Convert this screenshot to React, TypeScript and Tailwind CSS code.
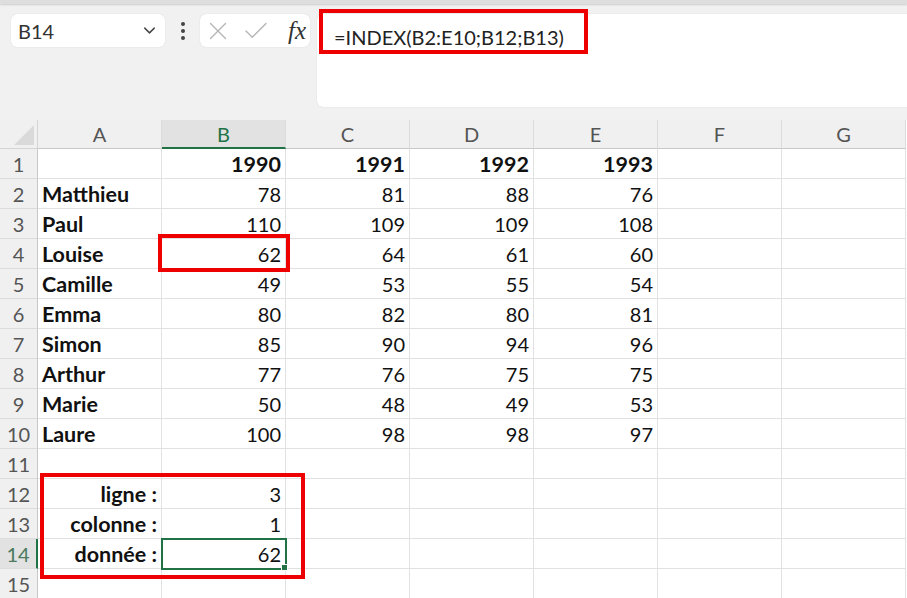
import { ChevronDown, X, Check } from 'lucide-react';

const cols = ['A', 'B', 'C', 'D', 'E', 'F', 'G'];

type Cell = string | number | null;

const rows: Cell[][] = [
  [null, 1990, 1991, 1992, 1993],
  ['Matthieu', 78, 81, 88, 76],
  ['Paul', 110, 109, 109, 108],
  ['Louise', 62, 64, 61, 60],
  ['Camille', 49, 53, 55, 54],
  ['Emma', 80, 82, 80, 81],
  ['Simon', 85, 90, 94, 96],
  ['Arthur', 77, 76, 75, 75],
  ['Marie', 50, 48, 49, 53],
  ['Laure', 100, 98, 98, 97],
  [],
  ['ligne :', 3],
  ['colonne :', 1],
  ['donnée :', 62],
  [],
];

function CellBox({ value, row, col }: { value: Cell; row: number; col: number }) {
  const isLabel = typeof value === 'string';
  const bold = isLabel || row === 0;
  const rightLabel = row >= 11;
  const selected = row === 13 && col === 1;
  return (
    <div
      className={`relative h-[30px] border-r border-b border-[#e1e1e1] bg-white flex items-center px-[4px] leading-none text-[#111] ${
        bold ? 'font-bold text-[21.5px] pt-[2px]' : 'text-[20px]'
      } ${isLabel && !rightLabel ? 'justify-start' : 'justify-end'} ${selected ? 'z-10' : ''}`}
    >
      {value ?? ''}
      {selected && (
        <>
          <div className="absolute -left-[1px] -top-[1px] w-[126px] h-[32px] border-2 border-[#217346]" />
          <div className="absolute -right-[3px] -bottom-[3px] w-[7px] h-[7px] bg-[#217346] border border-white" />
        </>
      )}
    </div>
  );
}

export default function App() {
  return (
    <div className="w-[907px] h-[598px] overflow-hidden bg-[#f1f1f1] font-['Lato','Open_Sans',sans-serif]">
      {/* top strip */}
      <div className="h-[4px] bg-[#dedede] shadow-[0_1px_2px_rgba(0,0,0,0.15)]" />

      {/* formula bar */}
      <div className="relative flex items-start pt-[10px] pl-[11px] h-[116px]">
        <div className="w-[154px] h-[33px] bg-white rounded-[6px] flex items-center justify-between pl-[7px] pr-[6px] shadow-[0_0_1px_rgba(0,0,0,0.2)]">
          <span className="text-[20px] text-[#333]">B14</span>
          <ChevronDown className="w-[19px] h-[19px] text-[#444]" strokeWidth={1.8} />
        </div>
        <div className="w-[35px] h-[33px] flex flex-col items-center justify-center gap-[3px]">
          <span className="w-[4px] h-[4px] rounded-full bg-[#444]" />
          <span className="w-[4px] h-[4px] rounded-full bg-[#444]" />
          <span className="w-[4px] h-[4px] rounded-full bg-[#444]" />
        </div>
        <div className="w-[110px] h-[33px] bg-white rounded-[6px] flex items-center pl-[3px] pr-[4px] shadow-[0_0_1px_rgba(0,0,0,0.2)]">
          <X className="w-[30px] h-[30px] text-[#b5b5b5]" strokeWidth={1.1} />
          <Check className="w-[30px] h-[30px] ml-[8px] text-[#b5b5b5]" strokeWidth={1.1} />
          <span className="ml-auto text-[25px] italic text-[#333] font-['Liberation_Serif',serif] leading-none">fx</span>
        </div>
        <div className="ml-[7px] flex-1 h-[93px] bg-white rounded-l-[6px] pl-[17px] pt-[8px] shadow-[0_0_1px_rgba(0,0,0,0.2)]">
          <span className="text-[20px] text-[#222]">=INDEX(B2:E10;B12;B13)</span>
        </div>
        <div className="absolute left-[319px] top-[5px] w-[269px] h-[45px] border-[4px] border-[#ee0000]" />
      </div>

      {/* sheet */}
      <div className="relative grid grid-cols-[38px_repeat(7,124px)] bg-white">
        <div className="relative h-[29px] bg-[#f0f0f0] border-r border-b border-[#d4d4d4] overflow-hidden">
          <div className="absolute right-[3px] bottom-[3px] w-0 h-0 border-l-[20px] border-l-transparent border-b-[20px] border-b-[#dadada]" />
        </div>
        {cols.map((c) => (
          <div
            key={c}
            className={`h-[29px] flex items-center justify-center text-[20px] border-r border-[#dcdcdc] ${
              c === 'B'
                ? 'bg-[#e2e2e2] text-[#217346] border-b-2 border-b-[#217346]'
                : 'bg-[#f0f0f0] text-[#555] border-b border-b-[#c8c8c8]'
            }`}
          >
            {c}
          </div>
        ))}

        {rows.map((r, ri) => (
          <div key={ri} className="contents">
            <div
              className={`h-[30px] flex items-center justify-center text-[20px] border-b border-[#dcdcdc] ${
                ri === 13
                  ? 'bg-[#e2e2e2] text-[#4b7a5e] border-r-2 border-r-[#217346]'
                  : 'bg-[#f0f0f0] text-[#555] border-r border-r-[#c8c8c8]'
              }`}
            >
              {ri + 1}
            </div>
            {cols.map((_, ci) => (
              <CellBox key={ci} value={r[ci] ?? null} row={ri} col={ci} />
            ))}
          </div>
        ))}

        {/* highlight boxes */}
        <div className="absolute z-20 left-[158px] top-[114px] w-[132px] h-[38px] border-[4px] border-[#ee0000]" />
        <div className="absolute z-20 left-[40px] top-[353px] w-[265px] h-[106px] border-[4px] border-[#ee0000]" />
      </div>
    </div>
  );
}
